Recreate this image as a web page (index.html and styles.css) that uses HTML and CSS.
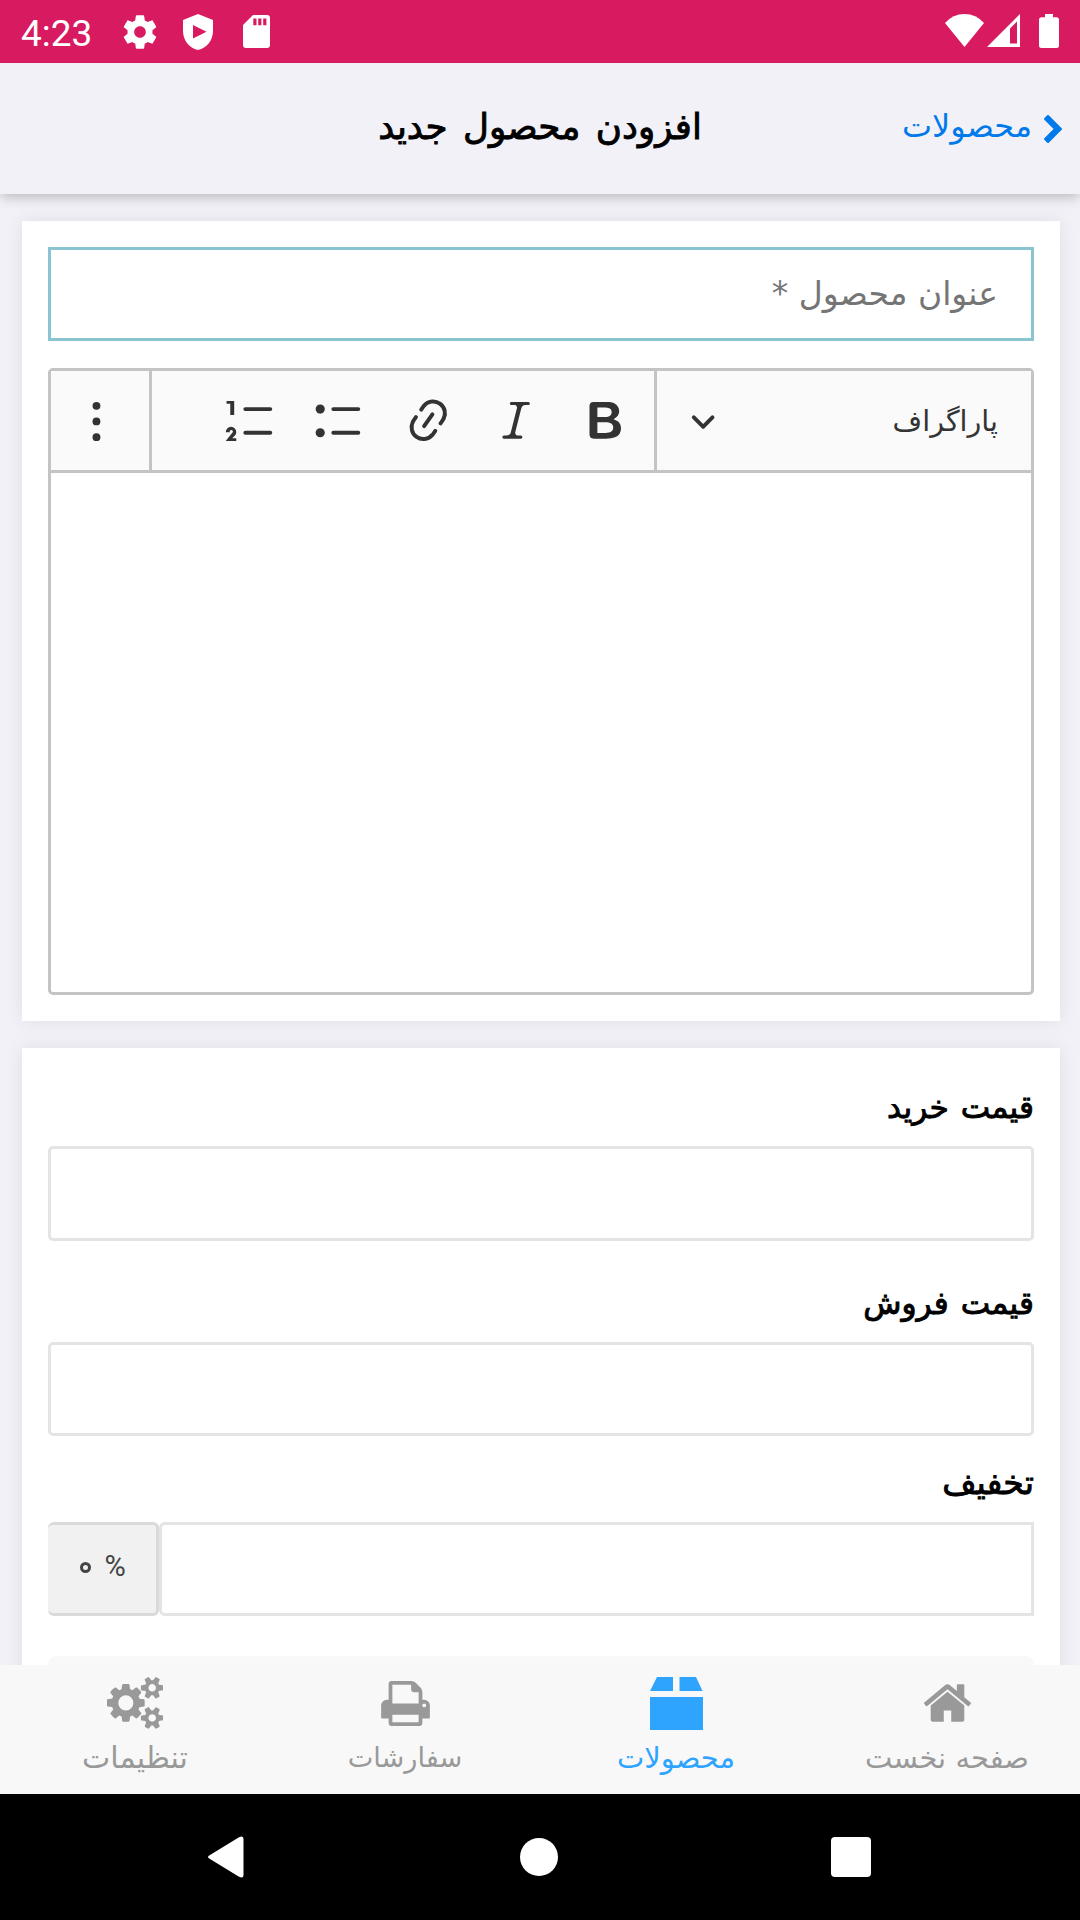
FILE: index.html
```html
<!DOCTYPE html>
<html lang="fa" dir="rtl">
<head>
<meta charset="utf-8">
<title>افزودن محصول جدید</title>
<link rel="stylesheet" href="styles.css">
</head>
<body>
<div class="screen">
  <div class="status" dir="ltr">
    <span class="clock">4:23</span>
    <svg class="st-gear" viewBox="0 0 24 24"><path d="M19.43 12.98c.04-.32.07-.64.07-.98s-.03-.66-.07-.98l2.11-1.65c.19-.15.24-.42.12-.64l-2-3.46c-.12-.22-.39-.3-.61-.22l-2.49 1c-.52-.4-1.08-.73-1.69-.98l-.38-2.65C14.46 2.18 14.25 2 14 2h-4c-.25 0-.46.18-.49.42l-.38 2.65c-.61.25-1.17.59-1.69.98l-2.49-1c-.23-.09-.49 0-.61.22l-2 3.46c-.13.22-.07.49.12.64l2.11 1.65c-.04.32-.07.65-.07.98s.03.66.07.98l-2.11 1.65c-.19.15-.24.42-.12.64l2 3.46c.12.22.39.3.61.22l2.49-1c.52.4 1.08.73 1.69.98l.38 2.65c.03.24.24.42.49.42h4c.25 0 .46-.18.49-.42l.38-2.65c.61-.25 1.17-.59 1.69-.98l2.49 1c.23.09.49 0 .61-.22l2-3.46c.12-.22.07-.49-.12-.64l-2.11-1.65zM12 15.5c-1.93 0-3.5-1.57-3.5-3.5s1.57-3.5 3.5-3.5 3.5 1.57 3.5 3.5-1.57 3.5-3.5 3.5z"/></svg>
    <svg class="st-shield" viewBox="0 0 30 36"><path fill-rule="evenodd" d="M15 0L30 6V17C30 26 24 34 15 36C6 34 0 26 0 17V6ZM10 11V24.500L23.500 17.800Z"/></svg>
    <svg class="st-sd" viewBox="0 0 27 33"><path fill-rule="evenodd" d="M10 0H24Q27 0 27 3V30Q27 33 24 33H3Q0 33 0 30V10ZM10.300 3.500V10.200H13.500V3.500ZM15.200 3.500V10.200H18.400V3.500ZM20.200 3.500V10.200H23.400V3.500Z"/></svg>
    <svg class="st-wifi" viewBox="0 0 39 33"><path d="M19.500 33L0 9Q8 0 19.500 0T39 9Z"/></svg>
    <svg class="st-signal" viewBox="0 0 33 33"><path fill-rule="evenodd" d="M33 0V33H0ZM30 7.500L23 14.500V29.500H30Z"/></svg>
    <svg class="st-battery" viewBox="0 0 20 34"><path d="M6 0H14V3.300H17.500Q20 3.300 20 5.800V31.500Q20 34 17.500 34H2.500Q0 34 0 31.500V5.800Q0 3.300 2.500 3.300H6Z"/></svg>
  </div>

  <header class="header">
    <a class="back">
      <svg class="chevron" viewBox="90 -192 1036 1612"><path d="M1107 659l-742 742q-19 19-45 19t-45-19l-166-166q-19-19-19-45t19-45l531-531-531-531q-19-19-19-45t19-45l166-166q19-19 45-19t45 19l742 742q19 19 19 45t-19 45z"/></svg>
      <span class="back-text">محصولات</span>
    </a>
    <h1 class="title">افزودن محصول جدید</h1>
  </header>

  <main class="content">
    <section class="card card-main">
      <div class="field field-title"><span class="placeholder">عنوان محصول *</span></div>
      <div class="editor">
        <div class="toolbar">
          <div class="heading-select">
            <span class="heading-text">پاراگراف</span>
            <svg class="caret" viewBox="0 0 10 10"><path d="M.941 4.523a.75.75 0 1 1 1.06-1.06l3.006 3.005 3.005-3.005a.75.75 0 1 1 1.06 1.06l-3.549 3.55a.75.75 0 0 1-1.168-.136L.941 4.523z"/></svg>
          </div>
          <div class="tools">
            <svg class="tool" viewBox="0 0 20 20"><path d="M10.187 17H5.773c-.637 0-1.092-.138-1.364-.415-.273-.277-.409-.718-.409-1.323V4.738c0-.617.14-1.062.419-1.332.279-.27.73-.406 1.354-.406h4.68c.69 0 1.288.041 1.793.124.506.083.96.242 1.36.477.341.197.644.447.906.75a3.262 3.262 0 0 1 .808 2.162c0 1.401-.722 2.426-2.167 3.075C15.05 10.175 16 11.315 16 13.01a3.756 3.756 0 0 1-2.296 3.504 6.1 6.1 0 0 1-1.517.377c-.571.073-1.238.11-2 .11zm-.217-6.217H7v4.087h3.069c1.977 0 2.965-.69 2.965-2.072 0-.707-.256-1.22-.768-1.537-.512-.319-1.277-.478-2.296-.478zM7 5.13v3.619h2.606c.729 0 1.292-.067 1.69-.2a1.6 1.6 0 0 0 .91-.765c.165-.267.247-.566.247-.897 0-.707-.26-1.176-.778-1.409-.519-.232-1.31-.348-2.375-.348H7z"/></svg>
            <svg class="tool" viewBox="0 0 20 20"><path d="M9.586 14.633l.021.004c-.036.335.095.655.393.962.082.083.173.15.274.201h1.474a.6.6 0 1 1 0 1.2H5.304a.6.6 0 0 1 0-1.2h1.15c.474-.07.809-.182 1.005-.334.157-.122.291-.32.404-.597l2.416-9.55a1.053 1.053 0 0 0-.281-.823 1.12 1.12 0 0 0-.442-.296H8.15a.6.6 0 0 1 0-1.2h6.443a.6.6 0 1 1 0 1.2h-1.195c-.376.056-.65.155-.823.296-.215.175-.423.439-.623.79l-2.366 9.347z"/></svg>
            <svg class="tool" viewBox="0 0 20 20"><path d="M11.077 15l.991-1.416a.75.75 0 1 1 1.229.86l-1.148 1.64a.748.748 0 0 1-.217.206 5.251 5.251 0 0 1-8.503-5.955.741.741 0 0 1 .12-.274l1.147-1.639a.75.75 0 1 1 1.228.86L4.933 10.7l.006.003a3.75 3.75 0 0 0 6.132 4.294l.006.004zm5.494-5.335a.748.748 0 0 1-.12.274l-1.147 1.639a.75.75 0 1 1-1.228-.86l.86-1.23a3.75 3.75 0 0 0-6.144-4.301l-.86 1.229a.75.75 0 0 1-1.229-.86l1.148-1.64a.748.748 0 0 1 .217-.206 5.251 5.251 0 0 1 8.503 5.955zm-4.563-2.532a.75.75 0 0 1 .184 1.045l-3.155 4.505a.75.75 0 1 1-1.229-.86l3.155-4.506a.75.75 0 0 1 1.045-.184z"/></svg>
            <svg class="tool" viewBox="0 0 20 20"><path d="M7 5.75c0 .414.336.75.75.75h9.5a.75.75 0 1 0 0-1.5h-9.5a.75.75 0 0 0-.75.75zM7 14.75c0 .414.336.75.75.75h9.5a.75.75 0 1 0 0-1.5h-9.500a.75.75 0 0 0-.75.75z"/><circle cx="2.75" cy="5.75" r="1.75"/><circle cx="2.75" cy="14.75" r="1.75"/></svg>
            <svg class="tool" viewBox="0 0 20 20"><path d="M7 5.75c0 .414.336.75.75.75h9.5a.75.75 0 1 0 0-1.5h-9.5a.75.75 0 0 0-.75.75zM3.500 2.700v5.300H2V3.700H.6v-1h2.900zM.343 17.857l2.590-3.257H2.920a.6.6 0 1 0-1.040 0H.302a2 2 0 1 1 3.995 0h-.001c-.048.405-.16.734-.333.988-.175.254-.59.692-1.244 1.312H4.300v1h-4l.043-.043zM7 14.750c0 .414.336.75.75.75h9.500a.75.75 0 1 0 0-1.500h-9.500a.75.75 0 0 0-.75.75z"/></svg>
          </div>
          <div class="more">
            <svg class="tool" viewBox="0 0 20 20"><circle cx="9.700" cy="4.500" r="1.5"/><circle cx="9.700" cy="10.450" r="1.5"/><circle cx="9.700" cy="16.450" r="1.5"/></svg>
          </div>
        </div>
        <div class="editable"></div>
      </div>
    </section>

    <section class="card card-price">
      <div class="group group-buy">
        <label class="label">قیمت خرید</label>
        <div class="field field-buy"></div>
      </div>
      <div class="group group-sell">
        <label class="label">قیمت فروش</label>
        <div class="field"></div>
      </div>
      <div class="group group-discount">
        <label class="label">تخفیف</label>
        <div class="joined">
          <div class="field field-discount"></div>
          <div class="addon"><span class="percent">%</span><span class="zero">۰</span></div>
        </div>
      </div>
      <div class="panel"></div>
    </section>
  </main>

  <nav class="tabs">
    <a class="tab">
      <svg class="tab-icon" viewBox="26 -1280 1612 1280" width="47" height="38"><path transform="scale(1 -1)" d="M1408 544v-480q0 -26 -19 -45t-45 -19h-384v384h-256v-384h-384q-26 0 -45 19t-19 45v480q0 1 .5 3t.5 3l575 474l575 -474q1 -2 1 -6zM1631 613l-62 -74q-8 -9 -21 -11h-3q-13 0 -21 7l-692 577l-692 -577q-12 -8 -24 -7q-13 2 -21 11l-62 74q-8 10 -7 23.5t11 21.5l719 599q32 26 76 26t76 -26l244 -204v195q0 14 9 23t23 9h192q14 0 23 -9t9 -23v-408l219 -182q10 -8 11 -21.5t-7 -23.5z"/></svg>
      <span class="tab-text t-home">صفحه نخست</span>
    </a>
    <a class="tab active">
      <svg class="tab-icon" viewBox="0 0 53 53" width="53" height="53"><path d="M7 0H23V14H0ZM29.500 0H46L52.500 14H29.500ZM0 20H53V53H0Z"/></svg>
      <span class="tab-text t-products">محصولات</span>
    </a>
    <a class="tab">
      <svg class="tab-icon" viewBox="0 -1408 1664 1536" width="49" height="45"><path transform="scale(1 -1)" d="M384 0h896v256h-896v-256zM384 640h896v384h-160q-40 0 -68 28t-28 68v160h-640v-640zM1536 576q0 26 -19 45t-45 19t-45 -19t-19 -45t19 -45t45 -19t45 19t19 45zM1664 576v-416q0 -13 -9.5 -22.5t-22.5 -9.5h-224v-160q0 -40 -28 -68t-68 -28h-960q-40 0 -68 28t-28 68v160h-224q-13 0 -22.5 9.5t-9.5 22.5v416q0 79 56.5 135.5t135.5 56.5h64v544q0 40 28 68t68 28h672q40 0 88 -20t76 -48l152 -152q28 -28 48 -76t20 -88v-256h64q79 0 135.5 -56.5t56.5 -135.5z"/></svg>
      <span class="tab-text t-orders">سفارشات</span>
    </a>
    <a class="tab">
      <svg class="tab-icon" viewBox="0 -1520 1920 1761" width="56.500" height="51.800"><path transform="scale(1 -1)" d="M896 640q0 106 -75 181t-181 75t-181 -75t-75 -181t75 -181t181 -75t181 75t75 181zM1664 128q0 52 -38 90t-90 38t-90 -38t-38 -90q0 -53 37.5 -90.5t90.5 -37.5t90.5 37.5t37.5 90.5zM1664 1152q0 52 -38 90t-90 38t-90 -38t-38 -90q0 -53 37.5 -90.5t90.5 -37.5t90.5 37.5t37.5 90.5zM1280 731v-185q0 -10 -7 -19.5t-16 -10.5l-155 -24q-11 -35 -32 -76q34 -48 90 -115q7 -11 7 -20q0 -12 -7 -19q-23 -30 -82.5 -89.5t-78.5 -59.5q-11 0 -21 7l-115 90q-37 -19 -77 -31q-11 -108 -23 -155q-7 -24 -30 -24h-186q-11 0 -20 7.5t-10 17.5l-23 153q-34 10 -75 31l-118 -89q-7 -7 -20 -7q-11 0 -21 8q-144 133 -144 160q0 9 7 19q10 14 41 53t47 61q-23 44 -35 82l-152 24q-10 1 -17 9.5t-7 19.5v185q0 10 7 19.5t16 10.5l155 24q11 35 32 76q-34 48 -90 115q-7 11 -7 20q0 12 7 20q22 30 82 89t79 59q11 0 21 -7l115 -90q34 18 77 32q11 108 23 154q7 24 30 24h186q11 0 20 -7.5t10 -17.5l23 -153q34 -10 75 -31l118 89q8 7 20 7q11 0 21 -8q144 -133 144 -160q0 -8 -7 -19q-12 -16 -42 -54t-45 -60q23 -48 34 -82l152 -23q10 -2 17 -10.5t7 -19.5zM1920 198v-140q0 -16 -149 -31q-12 -27 -30 -52q51 -113 51 -138q0 -4 -4 -7q-122 -71 -124 -71q-8 0 -46 47t-52 68q-20 -2 -30 -2t-30 2q-14 -21 -52 -68t-46 -47q-2 0 -124 71q-4 3 -4 7q0 25 51 138q-18 25 -30 52q-149 15 -149 31v140q0 16 149 31q13 29 30 52q-51 113 -51 138q0 4 4 7q4 2 35 20t59 34t30 16q8 0 46 -46.5t52 -67.5q20 2 30 2t30 -2q51 71 92 112l6 2q4 0 124 -70q4 -3 4 -7q0 -25 -51 -138q17 -23 30 -52q149 -15 149 -31zM1920 1222v-140q0 -16 -149 -31q-12 -27 -30 -52q51 -113 51 -138q0 -4 -4 -7q-122 -71 -124 -71q-8 0 -46 47t-52 68q-20 -2 -30 -2t-30 2q-14 -21 -52 -68t-46 -47q-2 0 -124 71q-4 3 -4 7q0 25 51 138q-18 25 -30 52q-149 15 -149 31v140q0 16 149 31q13 29 30 52q-51 113 -51 138q0 4 4 7q4 2 35 20t59 34t30 16q8 0 46 -46.5t52 -67.5q20 2 30 2t30 -2q51 71 92 112l6 2q4 0 124 -70q4 -3 4 -7q0 -25 -51 -138q17 -23 30 -52q149 -15 149 -31z"/></svg>
      <span class="tab-text t-settings">تنظیمات</span>
    </a>
  </nav>

  <div class="sysnav" dir="ltr">
    <svg class="nav-back" viewBox="0 0 37 42"><path d="M3 19L32 1.200Q36.500 -1 36.500 3V39Q36.500 43 32 40.800L3 23Q-1 21 3 19Z"/></svg>
    <span class="nav-home"></span>
    <span class="nav-recent"></span>
  </div>
</div>
</body>
</html>
```

FILE: styles.css
```css
* { box-sizing: border-box; }
body { margin: 0; font-family: "DejaVu Sans", sans-serif; }
svg { display: block; fill: currentColor; flex: none; }

.screen {
  width: 1080px; height: 1920px; overflow: hidden;
  display: flex; flex-direction: column;
  background: #f2f1f7; color: #000;
}

.status {
  flex: none; height: 63px; display: flex; align-items: flex-start; z-index: 2;
  background: #d81b60; color: #fff; padding: 0 21px;
}
.clock { width: 99px; font: 37px/43px Roboto, sans-serif; margin-top: 12px; }
.st-gear { width: 40px; height: 40px; margin-top: 12px; }
.st-shield { width: 30px; height: 36px; margin: 14px 0 0 23px; }
.st-sd { width: 27px; height: 33px; margin: 15px 0 0 30px; }
.st-wifi { width: 39px; height: 33px; margin: 14px 0 0 auto; }
.st-signal { width: 33px; height: 33px; margin: 14px 0 0 3px; }
.st-battery { width: 20px; height: 34px; margin: 14px 0 0 19px; }

.header {
  flex: none; height: 131px; display: grid; grid-template-columns: 1fr auto 1fr;
  align-items: center; padding: 0 18px; z-index: 1;
  background: #f2f1f7; box-shadow: 0 4px 12px -1px rgba(0, 0, 0, .24);
}
.back { display: flex; align-items: center; gap: 12px; color: #007aeb; }
.chevron { width: 18px; height: 28px; }
.back-text { font-size: 31.900px; line-height: 36px; margin-bottom: 6px; white-space: nowrap; }
.title {
  margin: 0 0 5px; font-size: 35.700px; font-weight: 400; white-space: nowrap; word-spacing: 4px;
  -webkit-text-stroke: .9px currentColor;
}

.content {
  flex: 1; min-height: 0; overflow: hidden; padding: 27px 20px 0 22px;
  display: flex; flex-direction: column; gap: 27px;
}
.card { background: #fff; padding: 26px; box-shadow: 0 0 18px rgba(0, 0, 0, .08); flex: none; }
.card-main { height: 800px; display: flex; flex-direction: column; gap: 27px; }
.card-price { height: 800px; padding-top: 27px; }

.field { flex: none; height: 94px; border: 3px solid #e4e4e4; border-radius: 5px; background: #fff; }
.field-buy { height: 95px; }
.field-title {
  border-color: #8ac4d0; border-radius: 0; padding: 0 33px 2px;
  display: flex; align-items: center;
}
.placeholder { color: #757575; font-size: 33px; white-space: nowrap; }

.editor { height: 627px; border: 3px solid #c4c4c4; border-radius: 5px; display: flex; flex-direction: column; }
.toolbar {
  height: 102px; border-bottom: 3px solid #c4c4c4; background: #fafafa;
  display: flex; align-items: stretch; color: #333;
}
.heading-select {
  width: 377px; border-left: 3px solid #c4c4c4; padding: 0 33px;
  display: flex; align-items: center; justify-content: space-between;
}
.heading-text { font-size: 28.600px; margin-top: 1px; }
.caret { width: 26.250px; height: 26.250px; }
.tools {
  flex: 1; border-left: 3px solid #c4c4c4; padding-right: 23px;
  display: flex; align-items: center; gap: 36px;
}
.tool { width: 52.500px; height: 52.500px; }
.more { width: 98px; display: flex; align-items: center; justify-content: center; padding-right: 5px; }
.editable { flex: 1; }

.group { display: flex; flex-direction: column; }
.label {
  flex: none; height: 71px; padding-top: 10px; font-size: 31.300px; line-height: 44px; word-spacing: 2px;
  -webkit-text-stroke: .9px currentColor;
}
.group-sell { margin-top: 31px; }
.group-sell, .group-buy { height: 165px; }
.group-discount { margin-top: 15px; }
.group-discount .label { font-size: 33.200px; }
.joined { display: flex; height: 94px; }
.field-discount { flex: 1; border-radius: 6px 0 0 6px; }
.addon {
  width: 111px; border: 3px solid #dadada; border-left: 0; border-radius: 6px; background: #f1f1f1;
  color: #444; display: flex; align-items: center; justify-content: center; gap: 13px; padding-left: 2px;
}
.percent { font: 29px/36px Roboto, sans-serif; margin-bottom: 6px; }
.zero {
  width: 11px; height: 11px; border: 3px solid #444; border-radius: 50%;
  font-size: 9px; line-height: 5px; overflow: hidden; margin-bottom: 3px; color: transparent;
}
.panel { height: 120px; margin-top: 40px; background: #f9f9f9; border-radius: 8px; }

.tabs { flex: none; height: 129px; display: flex; background: #f8f8f8; color: #999; z-index: 1; }
.tab { flex: none; width: 25%; display: grid; grid-template-rows: 76px 1fr; justify-items: center; align-items: center; }
.tab:nth-child(1) { padding-left: 4px; }
.tab:nth-child(2) { padding-left: 2px; }
.tab:nth-child(1) .tab-icon { margin-bottom: 1px; }
.tab-text { font-size: 29px; white-space: nowrap; line-height: 36px; align-self: start; margin-top: -1px; }
.t-orders { font-size: 27.200px; }
.t-settings { font-size: 30px; }
.active { color: #2fa4ff; }

.sysnav {
  flex: none; height: 126px; background: #000; color: #fff;
  display: flex; align-items: center; justify-content: space-between; padding: 0 209px 0 206.500px;
}
.nav-back { width: 37px; height: 42px; }
.nav-home { width: 38px; height: 38px; border-radius: 50%; background: #fff; margin-left: 4px; }
.nav-recent { width: 40px; height: 40px; border-radius: 4px; background: #fff; }
```
